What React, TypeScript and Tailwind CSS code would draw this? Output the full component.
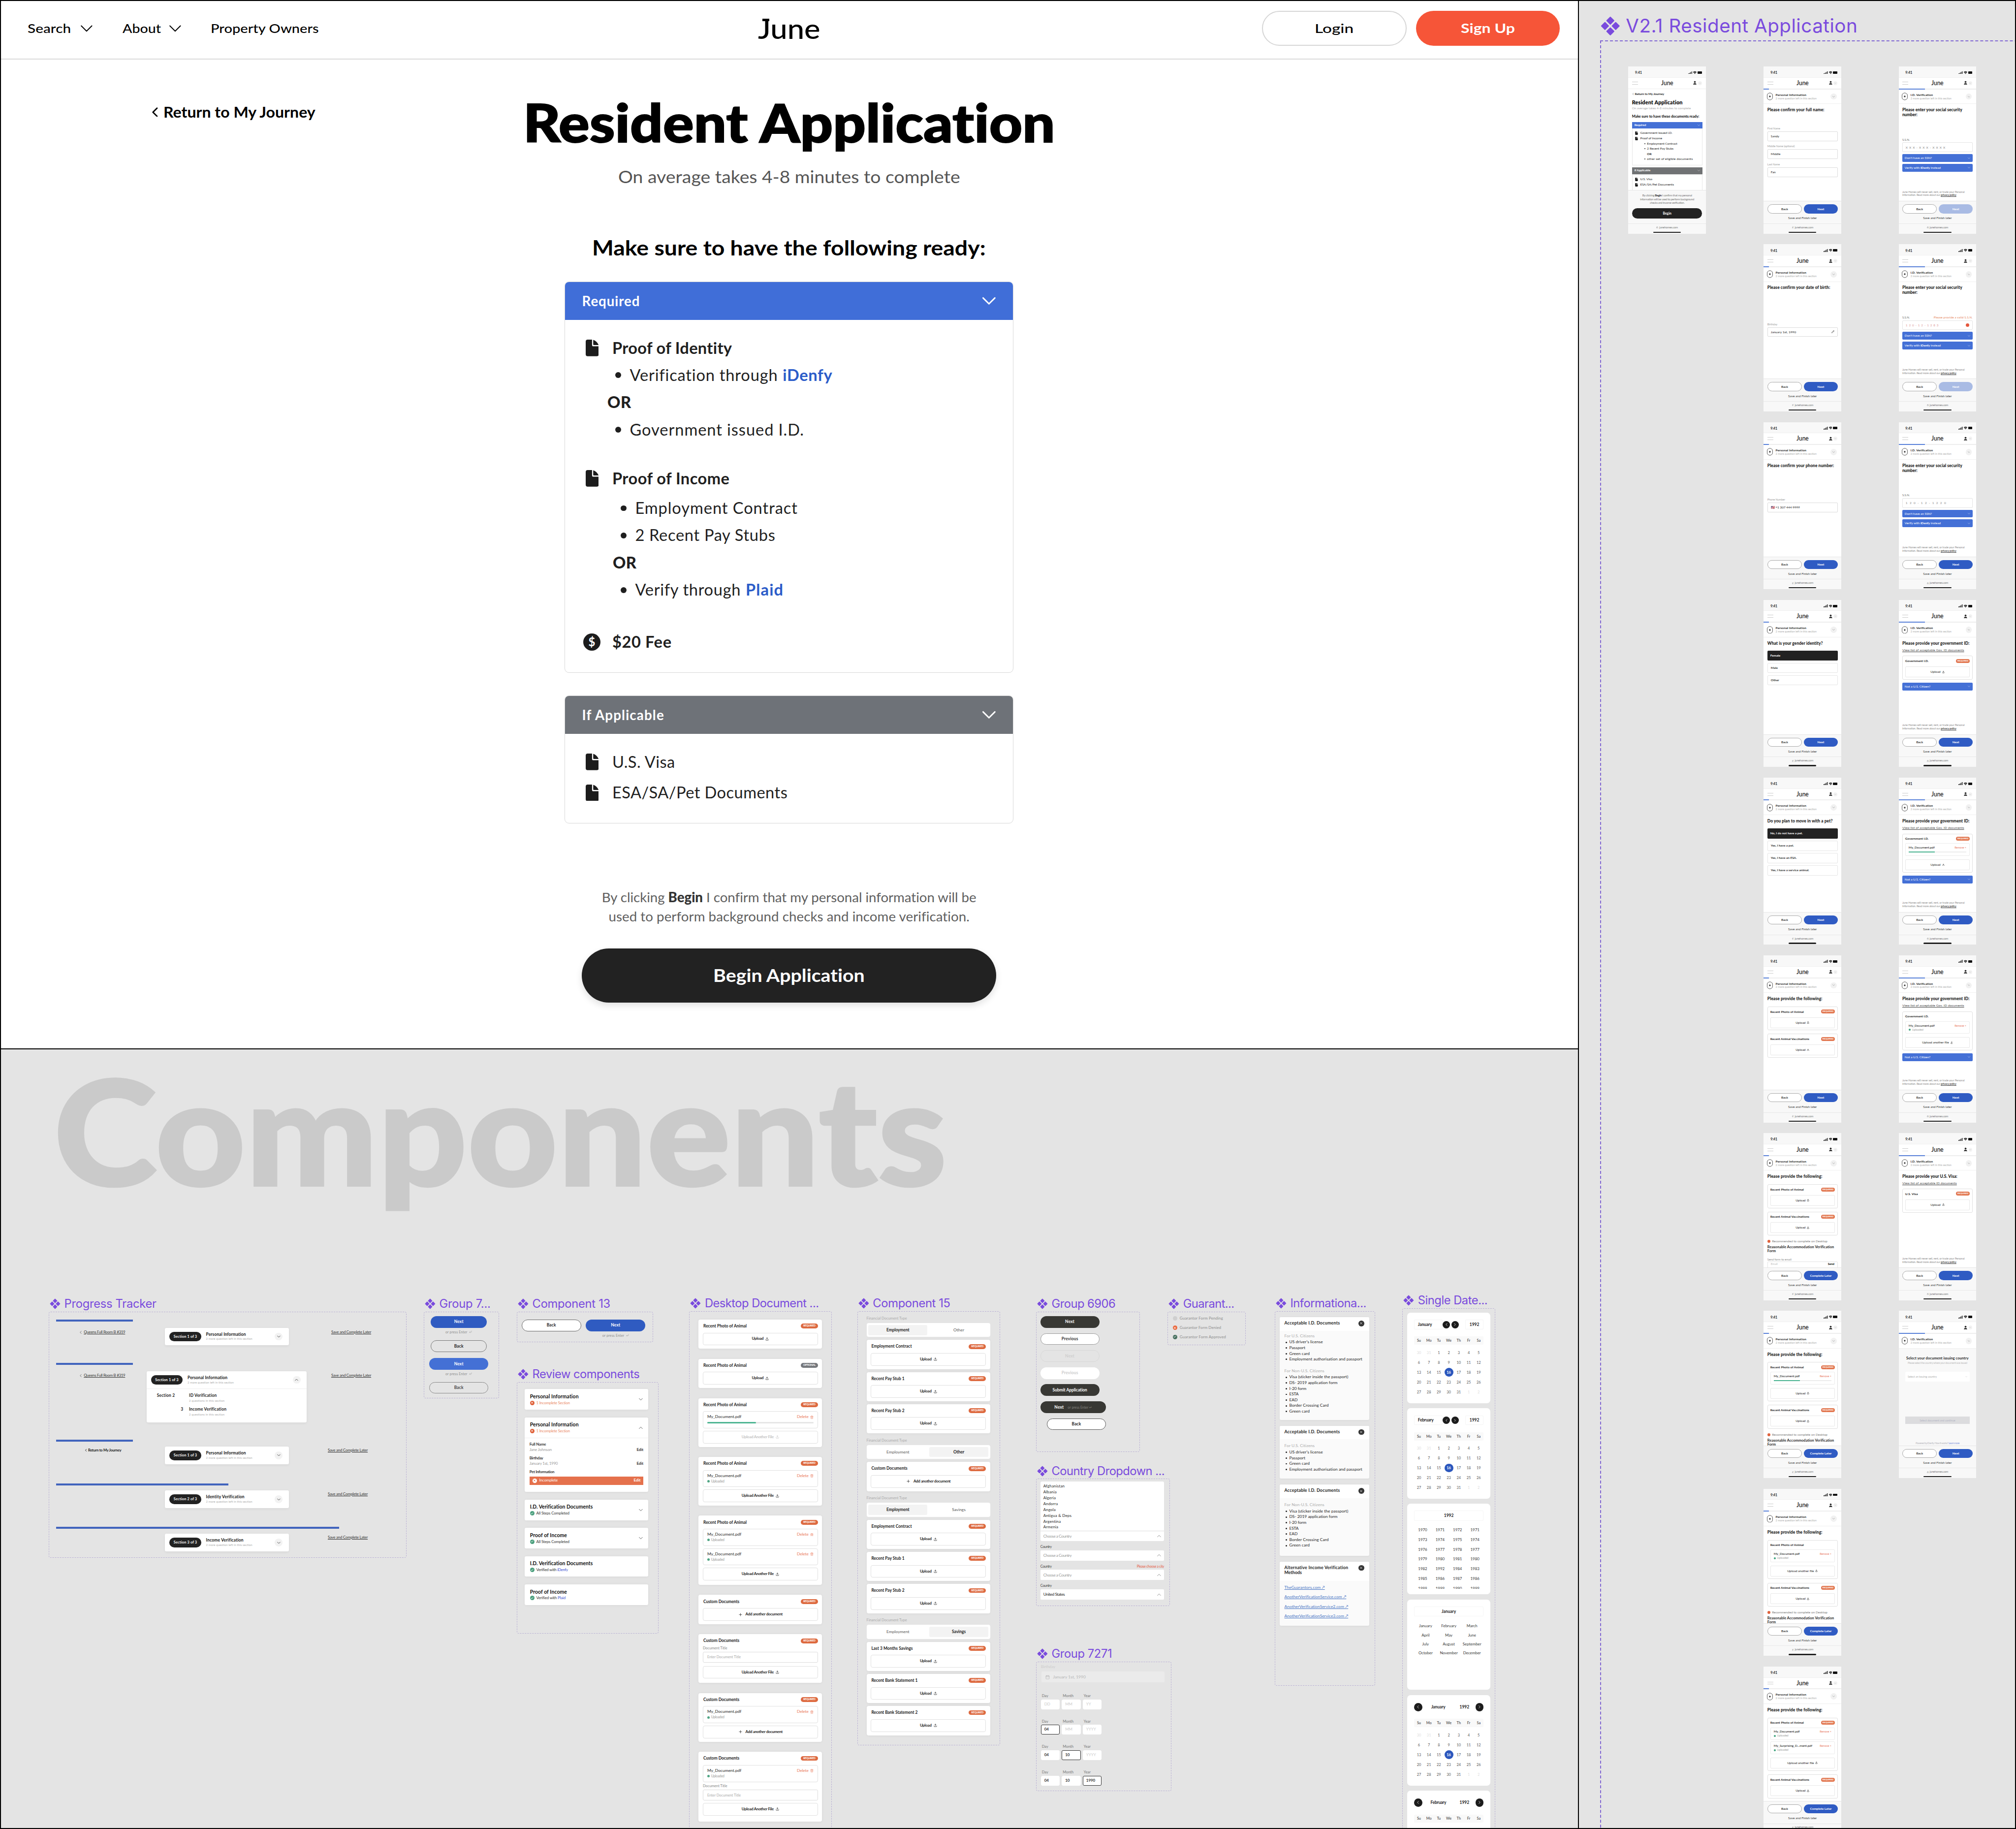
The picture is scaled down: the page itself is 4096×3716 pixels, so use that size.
import React, { useLayoutEffect, useRef } from "react";
import { Upload, Trash2, Plus, Calendar, Check, X, Pencil, Wifi, User, Lock, CornerDownLeft } from "lucide-react";

type Kids = { children?: React.ReactNode };

/* Single-line label fitted to `w` pixels, by tracking or, with `stretch`, by widening the letters. */
function T({ w, stretch = false, className = "", children }: Kids & { w?: number; stretch?: boolean; className?: string }) {
  const ref = useRef<HTMLSpanElement>(null);
  useLayoutEffect(() => {
    const el = ref.current;
    if (!el || !w) return;
    el.style.letterSpacing = "0px";
    el.style.transform = "none";
    el.style.marginRight = "0px";
    const zoom = (el as unknown as { currentCSSZoom?: number }).currentCSSZoom || 1;
    const range = document.createRange();
    range.selectNodeContents(el);
    const natural = range.getBoundingClientRect().width / zoom;
    const count = (el.textContent || "x").length;
    if (stretch) {
      el.style.transformOrigin = "0 50%";
      el.style.transform = `scaleX(${w / natural})`;
      el.style.marginRight = `${w - natural}px`;
    } else {
      el.style.letterSpacing = `${(w - natural) / count}px`;
    }
  }, [w, stretch]);
  return (
    <span ref={ref} className={"inline-block whitespace-nowrap " + className}>
      {children}
    </span>
  );
}

function Chevron({ className = "", dir = "down", sw = 2 }: { className?: string; dir?: "down" | "up" | "left" | "right"; sw?: number }) {
  const d = {
    down: "M2 7l10 10L22 7",
    up: "M2 17L12 7l10 10",
    left: "M17 2L7 12l10 10",
    right: "M7 2l10 10L7 22",
  }[dir];
  return (
    <svg viewBox="0 0 24 24" className={"shrink-0 " + className} fill="none" stroke="currentColor" strokeWidth={sw} strokeLinecap="round" strokeLinejoin="round">
      <path d={d} />
    </svg>
  );
}

function Diamonds({ className = "" }: { className?: string }) {
  return (
    <svg viewBox="0 0 24 24" className={"shrink-0 " + className} fill="currentColor" stroke="currentColor" strokeWidth="1.4" strokeLinejoin="round">
      <path d="M12 1.2l4.2 4.2L12 9.6 7.8 5.4zM12 14.4l4.2 4.2-4.2 4.2-4.2-4.2zM5.4 7.8L9.6 12l-4.2 4.2L1.2 12zM18.6 7.8l4.2 4.2-4.2 4.2-4.2-4.2z" />
    </svg>
  );
}

function DocIcon({ className = "" }: { className?: string }) {
  return (
    <svg viewBox="0 0 27 34" className={"shrink-0 " + className} fill="#1c1c1c">
      <path d="M4 0H13V11a2.6 2.6 0 0 0 2.6 2.6H27V30a4 4 0 0 1-4 4H4a4 4 0 0 1-4-4V4a4 4 0 0 1 4-4Z" />
      <path d="M15.4 0.6c5 1.600 9.500 6 11 10.600H17a1.600 1.600 0 0 1-1.600-1.600Z" />
    </svg>
  );
}

/* ------------------------------------------------------------------ */
/* Landing page                                                        */
/* ------------------------------------------------------------------ */

function Header() {
  return (
    <header className="grid h-[122px] grid-cols-3 items-center border-b-[3px] border-[#dadada] pb-1">
      <nav className="flex items-center pl-[57px] text-[26px] font-medium text-black">
        <T w={89} stretch>Search</T>
        <Chevron className="ml-[19px] h-[26px] w-[26px]" sw={1.8} />
        <T w={79} stretch className="ml-[61px]">About</T>
        <Chevron className="ml-[16px] h-[26px] w-[26px]" sw={1.8} />
        <T w={222} stretch className="ml-[60px]">Property Owners</T>
      </nav>
      <div className="flex justify-center">
        <span className="relative block h-[60px] w-[128px]">
          <T w={128} stretch className="text-[56px] font-medium leading-[60px] text-black">June</T>
          <i className="absolute left-[9px] top-[10px] h-[5px] w-[14px] bg-black" />
        </span>
      </div>
      <div className="flex justify-end gap-[19px] pr-[38px] text-[26px]">
        <span className="flex h-[71px] w-[297px] items-center justify-center rounded-full border-[3px] border-[#d6d6d6] font-medium">
          <T w={80} stretch>Login</T>
        </span>
        <span className="flex h-[71px] w-[295px] items-center justify-center rounded-full bg-[#f65538] font-bold text-white">
          <T w={111} stretch>Sign Up</T>
        </span>
      </div>
    </header>
  );
}

function Bullet() {
  return <i className="mr-[18px] block h-[12px] w-[12px] shrink-0 rounded-full bg-[#1f1f1f]" />;
}

function Line({ icon, pad = "", children }: Kids & { icon?: React.ReactNode; pad?: string }) {
  return (
    <div className={"flex h-[56px] items-center pt-[3px] " + pad}>
      {icon && <span className="flex w-[60px] shrink-0 items-center pl-[2px]">{icon}</span>}
      {children}
    </div>
  );
}

function CardHead({ color, label, w }: { color: string; label: string; w: number }) {
  return (
    <div className={"flex h-[80px] items-center justify-between px-[37px] pt-[2px] text-white " + color}>
      <T w={w} className="text-[28px] font-bold">{label}</T>
      <Chevron className="h-[29px] w-[29px]" sw={2.4} />
    </div>
  );
}

function Landing() {
  return (
    <section className="h-[2152px] w-full shrink-0 overflow-hidden bg-white">
      <Header />
      <div className="grid grid-cols-[1fr_1088px_1fr]">
        <div className="flex h-[128px] items-center pl-[308px] pt-[88px]">
          <Chevron dir="left" className="h-[20px] w-[20px]" sw={3.4} />
          <T w={312} stretch className="ml-[8px] text-[31px] font-bold leading-[40px] text-black">Return to My Journey</T>
        </div>
        <main className="flex flex-col items-center text-[33px] text-[#1f1f1f]">
          <h1 className="mt-[65px] flex h-[128px] items-center text-black">
            <T w={1092} stretch className="text-[107px] font-black leading-[128px] [-webkit-text-stroke:2px_#000]">Resident Application</T>
          </h1>
          <p className="mt-[26px] flex h-[44px] items-center text-[#555]">
            <T w={702} stretch className="text-[35px] leading-[44px]">On average takes 4-8 minutes to complete</T>
          </p>
          <h2 className="mt-[96px] flex h-[54px] items-center text-black">
            <T w={808} stretch className="text-[43px] font-bold leading-[54px]">Make sure to have the following ready:</T>
          </h2>

          <div className="mt-[43px] h-[803px] w-[922px] overflow-hidden rounded-[9px] border-2 border-[#d8d8d8]">
            <div className="-mx-[2px] -mt-[2px]">
              <CardHead color="bg-[#406ed8]" label="Required" w={119} />
            </div>
            <div className="pl-[37px] pt-[28px]">
              <Line icon={<DocIcon className="ml-[3px] h-[34px] w-[27px]" />}>
                <T w={246} className="font-bold">Proof of Identity</T>
              </Line>
              <Line pad="pl-[66px]">
                <Bullet />
                <T w={304}>Verification through</T>
                <T w={102} className="ml-[10px] font-bold text-[#2b5cc9]">iDenfy</T>
              </Line>
              <Line pad="pl-[50px]"><T w={49} className="font-black">OR</T></Line>
              <Line pad="pl-[66px]"><Bullet /><T w={358}>Government issued I.D.</T></Line>
              <div className="h-[44px]" />
              <Line icon={<DocIcon className="ml-[3px] h-[34px] w-[27px]" />}>
                <T w={241} className="font-bold">Proof of Income</T>
              </Line>
              <div className="h-[5px]" />
              <Line pad="pl-[77px]"><Bullet /><T w={334}>Employment Contract</T></Line>
              <Line pad="pl-[77px]"><Bullet /><T w={288}>2 Recent Pay Stubs</T></Line>
              <Line pad="pl-[61px]"><T w={49} className="font-black">OR</T></Line>
              <Line pad="pl-[77px]">
                <Bullet />
                <T w={217}>Verify through</T>
                <T w={78} className="ml-[10px] font-bold text-[#2b5cc9]">Plaid</T>
              </Line>
              <div className="h-[51px]" />
              <Line icon={<span className="-ml-[2px] flex h-[36px] w-[36px] items-center justify-center rounded-full bg-[#1c1c1c] text-[24px] font-bold leading-none text-white">$</span>}>
                <T w={122} className="font-bold">$20 Fee</T>
              </Line>
            </div>
          </div>

          <div className="mt-[47px] h-[263px] w-[922px] overflow-hidden rounded-[9px] border-2 border-[#d8d8d8]">
            <div className="-mx-[2px] -mt-[2px]">
              <CardHead color="bg-[#6e7278]" label="If Applicable" w={169} />
            </div>
            <div className="flex flex-col gap-[7px] pl-[37px] pt-[28px]">
              <Line icon={<DocIcon className="ml-[3px] h-[34px] w-[27px]" />}><T w={129}>U.S. Visa</T></Line>
              <Line icon={<DocIcon className="ml-[3px] h-[34px] w-[27px]" />}><T w={360}>ESA/SA/Pet Documents</T></Line>
            </div>
          </div>

          <div className="mt-[132px] flex flex-col items-center text-[28px] leading-[39px] text-[#606060]">
            <T w={769}>By clicking <b className="font-black text-[#333]">Begin</b> I confirm that my personal information will be</T>
            <T w={741}>used to perform background checks and income verification.</T>
          </div>
          <span className="mt-[46px] flex h-[111px] w-[851px] shrink-0 items-center justify-center rounded-full bg-[#222] text-white shadow-[0_6px_14px_rgba(0,0,0,0.12)]">
            <T w={311} stretch className="text-[37px] font-bold">Begin Application</T>
          </span>
        </main>
        <div />
      </div>
    </section>
  );
}

/* ------------------------------------------------------------------ */
/* Component canvas                                                    */
/* ------------------------------------------------------------------ */

function Group({ at, size, title, w, children }: Kids & { at: string; size: string; title: string; w: number }) {
  return (
    <div className={"absolute " + at}>
      <div className="mb-[4px] flex h-[26px] items-center gap-[8px] pl-[2px] pt-[2px] text-[#7a4bdd]">
        <Diamonds className="h-[22px] w-[22px]" />
        <T w={w} className="font-['Inter',sans-serif] text-[24px] leading-[24px]">{title}</T>
      </div>
      <div className={"overflow-hidden rounded-[4px] border-2 border-dashed border-[#bab1d4] " + size}>{children}</div>
    </div>
  );
}

function Round({ up = false }: { up?: boolean }) {
  return (
    <span className="flex h-[16px] w-[16px] shrink-0 items-center justify-center rounded-full bg-[#f2f2f2]">
      <Chevron dir={up ? "up" : "down"} className="h-[7px] w-[7px] text-[#333]" sw={3} />
    </span>
  );
}

function SectionPill({ n }: { n: number }) {
  return (
    <span className="flex h-[20px] w-[65px] shrink-0 items-center justify-center rounded-full bg-[#222] text-white">
      <T w={48} className="text-[7.500px] font-bold">Section {n} of 3</T>
    </span>
  );
}

function TrackerHead({ n, title, w, up }: { n: number; title: string; w: number; up?: boolean }) {
  return (
    <div className="flex h-[36px] items-center pl-[9px] pr-[13px]">
      <SectionPill n={n} />
      <div className="ml-[10px] flex flex-1 flex-col items-start">
        <T w={w} className="text-[8.500px] font-bold leading-[10px] text-[#111]">{title}</T>
        <T w={95} className="text-[6px] leading-[8px] text-[#aaa]">2 more question left in this section</T>
      </div>
      <Round up={up} />
    </div>
  );
}

function TrackerRow({ bar, height, back, tight, children }: Kids & { bar: string; height: string; back?: "room" | "journey"; tight?: boolean }) {
  return (
    <div className={height}>
      <div className={"h-[4px] bg-[#4164bd] " + bar} />
      <div className={"grid grid-cols-[224px_254px_1fr] items-start " + (tight ? "pt-[10px]" : "pt-[13px]")}>
        <div className={"flex h-[18px] items-center " + (tight ? "pl-[59px] pb-[3px]" : "pl-[48px]")}>
          {back === "room" && (
            <>
              <Chevron dir="left" className="mr-[3px] h-[6px] w-[6px]" />
              <T w={85} className="text-[8px] leading-[12px] underline text-[#333]">Queens Full Room B #319</T>
            </>
          )}
          {back === "journey" && (
            <>
              <Chevron dir="left" className="mr-[2px] h-[5px] w-[5px]" sw={4} />
              <T w={68} className="text-[7.500px] font-bold leading-[12px] text-[#111]">Return to My Journey</T>
            </>
          )}
        </div>
        <div className="whitespace-nowrap">{children}</div>
        <div className={"flex h-[18px] items-center " + (tight ? "pl-[80px] pb-[3px]" : "pl-[87px]")}>
          <T w={82} className="text-[8px] leading-[12px] underline text-[#333]">Save and Complete Later</T>
        </div>
      </div>
    </div>
  );
}

function ProgressTracker() {
  const card = "rounded-[3px] bg-white shadow-[0_2px_5px_rgba(0,0,0,0.06)]";
  return (
    <Group at="left-[100px] top-[509px]" size="h-[505px] w-[735px]" title="Progress Tracker" w={189}>
      <div className="pl-[14px] pt-[15px]">
        <TrackerRow bar="w-[158px]" height="h-[89px]" back="room">
          <div className={card}><TrackerHead n={1} title="Personal Information" w={82} /></div>
        </TrackerRow>
        <TrackerRow bar="w-[158px]" height="h-[158px]" back="room">
          <div className={"-ml-[38px] h-[105px] w-[329px] " + card}>
            <div className="border-b border-[#eee]"><TrackerHead n={1} title="Personal Information" w={82} up /></div>
            <div className="grid grid-cols-[66px_1fr] items-start gap-y-[8px] pl-[21px] pt-[9px] text-[8.500px] font-bold leading-[10px] text-[#222]">
              <T w={37}>Section 2</T>
              <div className="flex flex-col items-start">
                <T w={57}>ID Verification</T>
                <T w={73} className="text-[6px] font-normal text-[#aaa]">2 questions in this section</T>
              </div>
              <span className="pr-[12px] text-right">3</span>
              <div className="flex flex-col items-start">
                <T w={77}>Income Verification</T>
                <T w={73} className="text-[6px] font-normal text-[#aaa]">2 questions in this section</T>
              </div>
            </div>
          </div>
        </TrackerRow>
        <TrackerRow bar="w-[158px]" height="h-[90px]" back="journey" tight>
          <div className={card}><TrackerHead n={1} title="Personal Information" w={82} /></div>
        </TrackerRow>
        <TrackerRow bar="w-[354px]" height="h-[89px]" tight>
          <div className={card}><TrackerHead n={2} title="Identity Verification" w={79} /></div>
        </TrackerRow>
        <TrackerRow bar="w-[581px]" height="h-[60px]" tight>
          <div className={card}><TrackerHead n={3} title="Income Verification" w={77} /></div>
        </TrackerRow>
      </div>
    </Group>
  );
}

function Pill({ cls, children }: Kids & { cls: string }) {
  return <span className={"flex h-[24px] shrink-0 items-center justify-center rounded-full text-[8.500px] font-bold tracking-[0.2px] " + cls}>{children}</span>;
}

function EnterHint({ className = "" }: { className?: string }) {
  return (
    <span className={"flex items-center justify-center gap-[4px] text-[7px] leading-[9px] text-[#8c8c8c] " + className}>
      <T w={45}>or press Enter</T>
      <CornerDownLeft className="h-[6px] w-[6px]" />
    </span>
  );
}

function ButtonGroups() {
  return (
    <>
      <Group at="left-[870px] top-[509px]" size="h-[178px] w-[155px]" title="Group 7..." w={105}>
        <div className="flex flex-col items-center pr-[11px] pt-[8px]">
          <Pill cls="w-[115px] bg-[#2f5bc1] text-white">Next</Pill>
          <EnterHint className="mt-[4px] h-[9px]" />
          <Pill cls="mt-[13px] w-[115px] border border-[#777] text-[#222]">Back</Pill>
          <Pill cls="mt-[12px] w-[121px] bg-[#4470d5] text-white">Next</Pill>
          <EnterHint className="mt-[4px] h-[9px]" />
          <Pill cls="mt-[12px] w-[121px] border border-[#888] text-[#444]">Back</Pill>
        </div>
      </Group>
      <Group at="left-[1061px] top-[509px]" size="h-[63px] w-[280px]" title="Component 13" w={160}>
        <div className="flex gap-[10px] pl-[9px] pt-[15px]">
          <Pill cls="w-[122px] border border-[#666] bg-white text-[#222]">Back</Pill>
          <div>
            <Pill cls="w-[122px] bg-[#2f5bc1] text-white">Next</Pill>
            <EnterHint className="mt-[4px] h-[9px]" />
          </div>
        </div>
      </Group>
    </>
  );
}

function Dot({ color, kind = "check" }: { color: string; kind?: "check" | "x" | "none" }) {
  return (
    <i className={"flex h-[9px] w-[9px] shrink-0 items-center justify-center rounded-full " + color}>
      {kind === "check" && <Check className="h-[6px] w-[6px]" strokeWidth={4} />}
      {kind === "x" && <X className="h-[6px] w-[6px]" strokeWidth={4} />}
    </i>
  );
}

function ReviewHead({ title, w, open, chevron = true, children }: Kids & { title: string; w: number; open?: boolean; chevron?: boolean }) {
  return (
    <div className="flex h-[42px] shrink-0 items-center justify-between pl-[11px] pr-[11px]">
      <div className="flex flex-col items-start gap-[1px]">
        <T w={w} className="text-[10.500px] font-bold leading-[13px] text-[#111]">{title}</T>
        <span className="flex h-[11px] items-center gap-[4px] text-[8px] leading-[11px]">{children}</span>
      </div>
      {chevron && <Chevron dir={open ? "up" : "down"} className="h-[8px] w-[8px] text-[#333]" sw={2.4} />}
    </div>
  );
}

function Review() {
  const card = "h-[42px] rounded-[3px] bg-white shadow-[0_1px_5px_rgba(0,0,0,0.05)]";
  const incomplete = (
    <>
      <Dot color="bg-[#df6038] text-white" kind="x" />
      <T w={69} className="text-[#ea8b68]">1 Incomplete Section</T>
    </>
  );
  const complete = (
    <>
      <Dot color="bg-[#4b9f7d] text-white" />
      <T w={68} className="text-[#333]">All Steps Completed</T>
    </>
  );
  const field = "flex items-end justify-between text-[8px] leading-[11px]";
  return (
    <Group at="left-[1061px] top-[653px]" size="h-[517px] w-[291px]" title="Review components" w={220}>
      <div className="flex w-[284px] flex-col gap-[16px] px-[15px] pt-[14px]">
        <div className={card}><ReviewHead title="Personal Information" w={100}>{incomplete}</ReviewHead></div>
        <div className="h-[153px] rounded-[3px] bg-white shadow-[0_1px_5px_rgba(0,0,0,0.05)]">
          <div className="border-b-2 border-[#eee]"><ReviewHead title="Personal Information" w={100} open>{incomplete}</ReviewHead></div>
          <div className="flex flex-col px-[10px] pt-[7px] font-bold text-[#333]">
            <div className={field}>
              <div className="flex flex-col items-start"><T w={34}>Full Name</T><T w={46} className="font-normal text-[#999]">Jane Johnson</T></div>
              <T w={14} className="mr-[6px]">Edit</T>
            </div>
            <div className={"mt-[6px] " + field}>
              <div className="flex flex-col items-start"><T w={28}>Birthday</T><T w={58} className="font-normal text-[#999]">January 1st, 1990</T></div>
              <T w={14} className="mr-[6px]">Edit</T>
            </div>
            <T w={51} className="mt-[6px] self-start text-[8px] leading-[12px]">Pet Information</T>
            <div className="mt-[3px] flex h-[18px] items-center gap-[5px] bg-[#e5714c] px-[6px] text-[8px] text-white">
              <Dot color="bg-white text-[#e5714c]" kind="x" />
              <T w={38} className="font-normal">Incomplete</T>
              <span className="flex-1" />
              <T w={14}>Edit</T>
            </div>
          </div>
        </div>
        <div className={card}><ReviewHead title="I.D. Verification Documents" w={129}>{complete}</ReviewHead></div>
        <div className={card}><ReviewHead title="Proof of Income" w={76}>{complete}</ReviewHead></div>
        <div className={card}>
          <ReviewHead title="I.D. Verification Documents" w={129} chevron={false}>
            <Dot color="bg-[#4b9f7d] text-white" /><T w={65} className="text-[#333]">Verified with <b className="font-normal text-[#3b4fd0]">iDenfy</b></T>
          </ReviewHead>
        </div>
        <div className={card}>
          <ReviewHead title="Proof of Income" w={76} chevron={false}>
            <Dot color="bg-[#4b9f7d] text-white" /><T w={60} className="text-[#333]">Verified with <b className="font-normal text-[#3b4fd0]">Plaid</b></T>
          </ReviewHead>
        </div>
      </div>
    </Group>
  );
}

/* Document upload cards */

function Badge({ optional = false }: { optional?: boolean }) {
  return (
    <span className={"flex h-[10px] w-[35px] items-center justify-center rounded-full text-white " + (optional ? "bg-[#75787c]" : "bg-[#dd6a40]")}>
      <T w={25} className="text-[5.500px] font-bold leading-[10px]">{optional ? "OPTIONAL" : "REQUIRED"}</T>
    </span>
  );
}

function UploadBox({ kind = "upload" }: { kind?: "upload" | "another" | "faded" | "add" }) {
  return (
    <div className={"flex h-[26px] shrink-0 items-center justify-center gap-[4px] rounded-[4px] border border-[#e0e0e0] text-[8px] font-bold " + (kind === "faded" ? "text-[#c4c4c4]" : "text-[#222]")}>
      {kind === "add" && <Plus className="mr-[2px] h-[9px] w-[9px]" strokeWidth={2} />}
      <T w={kind === "upload" ? 24 : kind === "add" ? 76 : 66}>
        {kind === "upload" ? "Upload" : kind === "add" ? "Add another document" : "Upload Another File"}
      </T>
      {kind !== "add" && <Upload className="h-[7px] w-[7px]" strokeWidth={2.500} />}
    </div>
  );
}

function FileBox({ loading = false }: { loading?: boolean }) {
  return (
    <div className="h-[35px] shrink-0 rounded-[4px] border border-[#e0e0e0] px-[8px] pt-[5px]">
      <div className="flex items-center justify-between text-[8.500px] leading-[12px]">
        <T w={70} className="text-[#222]">My_Document.pdf</T>
        <span className="flex items-center gap-[3px] text-[#ea7a5c]"><T w={24}>Delete</T><Trash2 className="h-[7px] w-[7px]" /></span>
      </div>
      {loading ? (
        <div className="mt-[4px] h-[3px] rounded-full bg-[#e6e6e6]"><div className="h-[3px] w-[100px] rounded-full bg-[#4fb593]" /></div>
      ) : (
        <span className="flex items-center gap-[3px] text-[7px] leading-[10px] text-[#999]"><i className="h-[5px] w-[5px] rounded-full bg-[#4fa583]" /><T w={27}>Uploaded</T></span>
      )}
    </div>
  );
}

function TitleInput() {
  return (
    <div className="flex shrink-0 flex-col">
      <T w={50} className="self-start text-[7.500px] leading-[9px] text-[#888]">Document Title</T>
      <div className="mt-[2px] flex h-[22px] items-center rounded-[3px] border border-[#dcdcdc] px-[8px]"><T w={69} className="text-[7.500px] text-[#aaa]">Enter Document Title</T></div>
    </div>
  );
}

function DocCard({ title, w, size = "h-[60px]", optional, children }: Kids & { title: string; w: number; size?: string; optional?: boolean }) {
  return (
    <div className={"flex w-[254px] shrink-0 flex-col gap-[5px] rounded-[4px] bg-white px-[9px] shadow-[0_1px_5px_rgba(0,0,0,0.05)] " + size}>
      <div className="flex h-[22px] shrink-0 items-center justify-between pt-[5px]">
        <T w={w} className="pl-px text-[8.500px] font-bold text-[#1a1a1a]">{title}</T>
        <Badge optional={optional} />
      </div>
      {children}
    </div>
  );
}

function DesktopDocs() {
  const animal = "Recent Photo of Animal";
  return (
    <Group at="left-[1415px] top-[508px]" size="h-[1110px] w-[293px]" title="Desktop Document ..." w={234}>
      <div className="flex flex-col gap-[20.700px] pl-[18px] pt-[16px]">
        <DocCard title={animal} w={89}><UploadBox /></DocCard>
        <DocCard title={animal} w={89} optional><UploadBox /></DocCard>
        <DocCard title={animal} w={89} size="h-[100px]"><FileBox loading /><UploadBox kind="faded" /></DocCard>
        <DocCard title={animal} w={89} size="h-[100px]"><FileBox /><UploadBox kind="another" /></DocCard>
        <DocCard title={animal} w={89} size="h-[142px]"><FileBox /><FileBox /><UploadBox kind="another" /></DocCard>
        <DocCard title="Custom Documents" w={74}><UploadBox kind="add" /></DocCard>
        <DocCard title="Custom Documents" w={74} size="h-[100px]"><div className="-mt-[2px] mb-[2px]"><TitleInput /></div><UploadBox kind="another" /></DocCard>
        <DocCard title="Custom Documents" w={74} size="h-[100px]"><FileBox /><UploadBox kind="add" /></DocCard>
        <DocCard title="Custom Documents" w={74} size="h-[143px]"><FileBox /><TitleInput /><UploadBox kind="another" /></DocCard>
      </div>
    </Group>
  );
}

function Toggle({ left, right, active }: { left: string; right: string; active: "l" | "r" }) {
  const on = "bg-[#f3f3f3] font-bold text-[#222]";
  const off = "text-[#555]";
  return (
    <div>
      <div className="flex h-[24px] items-center pt-[5px]"><T w={83} className="text-[7.500px] text-[#aaa]">Financial Document Type</T></div>
      <div className="flex h-[29px] w-[254px] gap-[4px] rounded-[4px] bg-white p-[4px] text-[8.500px]">
        <span className={"flex flex-1 items-center justify-center rounded-[3px] " + (active === "l" ? on : off)}><T w={47}>{left}</T></span>
        <span className={"flex flex-1 items-center justify-center rounded-[3px] " + (active === "r" ? on : off)}>{right}</span>
      </div>
    </div>
  );
}

function Component15() {
  const Up = ({ t, w }: { t: string; w: number }) => <DocCard title={t} w={w}><UploadBox /></DocCard>;
  return (
    <Group at="left-[1760px] top-[508px]" size="h-[891px] w-[293px]" title="Component 15" w={159}>
      <div className="flex flex-col gap-[5.900px] pl-[18px]">
        <div className="-mt-[1px]"><Toggle left="Employment" right="Other" active="l" /></div>
        <Up t="Employment Contract" w={83} />
        <Up t="Recent Pay Stub 1" w={68} />
        <Up t="Recent Pay Stub 2" w={68} />
        <div className="-mt-[6px]"><Toggle left="Employment" right="Other" active="r" /></div>
        <DocCard title="Custom Documents" w={74}><UploadBox kind="add" /></DocCard>
        <div className="-mt-[6px]"><Toggle left="Employment" right="Savings" active="l" /></div>
        <Up t="Employment Contract" w={83} />
        <Up t="Recent Pay Stub 1" w={68} />
        <Up t="Recent Pay Stub 2" w={68} />
        <div className="-mt-[6px]"><Toggle left="Employment" right="Savings" active="r" /></div>
        <Up t="Last 3 Months Savings" w={85} />
        <Up t="Recent Bank Statement 1" w={95} />
        <Up t="Recent Bank Statement 2" w={95} />
      </div>
    </Group>
  );
}

function Group6906() {
  return (
    <Group at="left-[2127px] top-[509px]" size="h-[288px] w-[213px]" title="Group 6906" w={131}>
      <div className="flex flex-col items-start gap-[11px] pl-[8px] pt-[8px]">
        <Pill cls="w-[121px] bg-[#383834] text-white">Next</Pill>
        <Pill cls="w-[121px] border border-[#999] bg-white text-[#333]">Previous</Pill>
        <Pill cls="w-[121px] border border-[#d8d8d8] text-[#cfcfcf]">Next</Pill>
        <Pill cls="w-[121px] bg-white text-[#ccc]">Previous</Pill>
        <Pill cls="w-[121px] bg-[#383834] text-white"><T w={71}>Submit Application</T></Pill>
        <Pill cls="w-[135px] gap-[8px] bg-[#383834] text-white">Next<T w={50} className="text-[7px] font-normal text-[#85857f]">or press Enter ↵</T></Pill>
        <Pill cls="ml-[13px] w-[122px] border border-[#555] bg-white text-[#222]">Back</Pill>
      </div>
    </Group>
  );
}

function Guarantor() {
  return (
    <Group at="left-[2397px] top-[509px]" size="h-[69px] w-[161px]" title="Guarant..." w={105}>
      <div className="flex flex-col gap-[9px] pl-[10px] pt-[8px] text-[8px] leading-[10px] text-[#8c8c8c]">
        <span className="flex h-[10px] items-center gap-[5px]"><Dot color="bg-[#cfcfcf]" kind="none" /><T w={89}>Guarantor Form Pending</T></span>
        <span className="flex h-[10px] items-center gap-[5px]"><Dot color="bg-[#ea6a3f] text-white" kind="x" /><T w={85}>Guarantor Form Denied</T></span>
        <span className="flex h-[10px] items-center gap-[5px]"><Dot color="bg-[#47705f] text-white" /><T w={95}>Guarantor Form Approved</T></span>
      </div>
    </Group>
  );
}

function CountryDropdown() {
  const countries = ["Afghanistan", "Albania", "Algeria", "Andorra", "Angola", "Antigua & Deps", "Argentina", "Armenia"];
  const Field = ({ value, filled, error }: { value: string; filled?: boolean; error?: boolean }) => (
    <div>
      <div className="flex h-[19px] items-end justify-between pb-[2px] text-[7.500px] leading-[10px] text-[#444]">
        <T w={23}>Country</T>
        {error && <T w={56} className="text-[7px] text-[#e4573d]">Please choose a city</T>}
      </div>
      <div className="flex h-[21px] items-center justify-between rounded-[2px] bg-white px-[6px] text-[8.500px]">
        <T w={filled ? 44 : 58} className={filled ? "text-[#222]" : "text-[#999]"}>{value}</T>
        <Chevron dir="up" className="h-[8px] w-[8px] text-[#555]" />
      </div>
    </div>
  );
  return (
    <Group at="left-[2127px] top-[852px]" size="h-[261px] w-[275px]" title="Country Dropdown ..." w={232}>
      <div className="w-[262px] pl-[8px] pt-[5px]">
        <div className="flex h-[122px] flex-col overflow-hidden rounded-[3px] bg-white text-[8px] text-[#222]">
          <ul className="h-[102px] shrink-0 border-b border-[#ddd] px-[6px] pt-[4px] leading-[12px] tracking-[0.200px]">
            {countries.map((c) => <li key={c}>{c}</li>)}
          </ul>
          <div className="flex flex-1 items-center justify-between px-[6px] text-[8.500px] text-[#999]"><T w={58}>Choose a Country</T><Chevron dir="up" className="h-[8px] w-[8px] text-[#555]" /></div>
        </div>
        <Field value="Choose a Country" />
        <Field value="Choose a Country" error />
        <Field value="United States" filled />
      </div>
    </Group>
  );
}

function DateInputs() {
  const rows = [
    { v: ["DD", "MM", "YY"], active: -1, set: 0 },
    { v: ["04", "MM", "YYYY"], active: 0, set: 1 },
    { v: ["04", "10", "YYYY"], active: 1, set: 2 },
    { v: ["04", "10", "1990"], active: 2, set: 3 },
  ];
  return (
    <Group at="left-[2127px] top-[1227px]" size="h-[266px] w-[278px]" title="Group 7271" w={124}>
      <div className="pl-[9px] pt-[4px]">
        <div className="h-[14px] text-[8px] leading-[12px] text-[#cdcdcd]">Birthday</div>
        <div className="ml-[1px] mt-[2px] flex h-[22px] w-[253px] items-center gap-[7px] rounded-[2px] bg-[#ebebeb] px-[8px] text-[#b5b5b5]">
          <Calendar className="h-[9px] w-[9px]" /><T w={67} className="text-[8.500px]">January 1st, 1990</T>
        </div>
        <div className="mt-[23px] flex flex-col gap-[20.300px]">
          {rows.map((r, i) => (
            <div key={i} className="flex gap-[4px]">
              {r.v.map((v, j) => (
                <div key={j} className="w-[39px]">
                  <div className="h-[12px] pl-[2px] text-[7.500px] leading-[10px] text-[#777]">{["Day", "Month", "Year"][j]}</div>
                  <div className={"flex h-[20px] items-center rounded-[3px] bg-white pl-[6px] text-[8px] " + (r.active === j ? "border border-[#333] " : "border border-white ") + (j < r.set ? "font-bold text-[#333]" : "text-[#ccc]")}>{v}</div>
                </div>
              ))}
            </div>
          ))}
        </div>
      </div>
    </Group>
  );
}

const US: [string, number][] = [["US driver's license", 69], ["Passport", 33], ["Green card", 42], ["Employment authorisation and passport", 150]];
const NON_US: [string, number][] = [["Visa (sticker inside the passport)", 121], ["DS- 2019 application form", 99], ["I-20 form", 35], ["ESTA", 19], ["EAD", 17], ["Border Crossing Card", 81], ["Green card", 42]];

function InfoHead({ children, tall }: Kids & { tall?: boolean }) {
  return (
    <div className={"flex justify-between rounded-t-[3px] bg-white pl-[10px] pr-[10px] pt-[7px] text-[9px] font-bold leading-[11px] text-[#222] " + (tall ? "h-[40px]" : "h-[28px]")}>
      <div>{children}</div>
      <i className="flex h-[12px] w-[12px] items-center justify-center rounded-full bg-[#333] text-white"><X className="h-[7px] w-[7px]" strokeWidth={3} /></i>
    </div>
  );
}

function InfoList({ label, w, items }: { label: string; w: number; items: [string, number][] }) {
  return (
    <div className="flex flex-col items-start pl-[10px] pt-[7px] text-[8.500px] leading-[11.700px]">
      <T w={w} className="leading-[14px] text-[#aaa]">{label}</T>
      {items.map(([t, tw]) => (
        <div key={t} className="flex h-[11.700px] items-center gap-[5px] pl-[2px] text-[#222]"><i className="h-[3px] w-[3px] rounded-full bg-[#222]" /><T w={tw}>{t}</T></div>
      ))}
    </div>
  );
}

function Informational() {
  const card = "rounded-[3px] bg-[#fafafa] shadow-[0_1px_4px_rgba(0,0,0,0.05)]";
  const title = <T w={114}>Acceptable I.D. Documents</T>;
  return (
    <Group at="left-[2617px] top-[508px]" size="h-[769px] w-[206px]" title="Informationa..." w={156}>
      <div className="flex w-[193px] flex-col gap-[12px] pl-[9px] pt-[11px]">
        <div className={"h-[211px] " + card}><InfoHead>{title}</InfoHead><div className="-mt-[3px]"><InfoList label="For U.S. Citizens" w={62} items={US} /></div><div className="mt-[4px]"><InfoList label="For Non-U.S. Citizens" w={82} items={NON_US} /></div></div>
        <div className={"h-[109px] " + card}><InfoHead>{title}</InfoHead><InfoList label="For U.S. Citizens" w={62} items={US} /></div>
        <div className={"h-[146px] " + card}><InfoHead>{title}</InfoHead><InfoList label="For Non-U.S. Citizens" w={82} items={NON_US} /></div>
        <div className={"h-[132px] " + card}>
          <InfoHead tall><T w={131}>Alternative Income Verification</T><br />Methods</InfoHead>
          <div className="flex flex-col items-start pl-[10px] pt-[4px] text-[8.500px] leading-[19.500px] text-[#4674c4] underline">
            <T w={83}>TheGuarantors.com ↗</T>
            <T w={127}>AnotherVerificationService.com ↗</T>
            <T w={131}>AnotherVerificationService2.com ↗</T>
            <T w={131}>AnotherVerificationService3.com ↗</T>
          </div>
        </div>
      </div>
    </Group>
  );
}

function Arrow({ dir, size }: { dir: "left" | "right"; size: string }) {
  return <i className={"flex shrink-0 items-center justify-center rounded-full bg-[#1c1c1c] text-white " + size}><Chevron dir={dir} className="h-[6px] w-[6px]" sw={3} /></i>;
}

function CalCard({ children }: Kids) {
  return <div className="h-[185.600px] w-[171px] shrink-0 overflow-hidden rounded-[7px] bg-white px-[14px] pt-[14px]">{children}</div>;
}

function CalMonth({ month, wide }: { month: string; wide?: boolean }) {
  const days = Array.from({ length: 35 }, (_, i) => (i < 2 ? 30 + i : i < 33 ? i - 1 : i - 32));
  const mw = month === "January" ? 29 : 32;
  return (
    <CalCard>
      {wide ? (
        <div className="flex h-[21px] items-center justify-between text-[8.500px] font-bold text-[#222]">
          <Arrow dir="left" size="h-[17px] w-[17px]" />
          <span className="flex-1 pl-[2px] text-center"><T w={mw}>{month}</T></span>
          <span className="w-[45px] text-center">1992</span>
          <Arrow dir="right" size="h-[17px] w-[17px]" />
        </div>
      ) : (
        <div className="flex h-[21px] items-center text-[8.500px] font-bold text-[#222]">
          <span className="flex h-[20px] w-[59px] items-center rounded-[2px] border border-[#f5f5f5] pl-[7px]"><T w={mw}>{month}</T></span>
          <Arrow dir="left" size="h-[15px] w-[15px]" />
          <span className="w-[3px]" />
          <Arrow dir="right" size="h-[15px] w-[15px]" />
          <span className="ml-[13px] flex h-[20px] flex-1 items-center justify-center rounded-[2px] border border-[#f5f5f5]">1992</span>
        </div>
      )}
      <div className="mt-[14px] grid h-[17px] grid-cols-7 items-center rounded-[2px] bg-[#f9f9f9] text-center text-[7.500px] font-medium text-[#444]">
        {["Su", "Mo", "Tu", "We", "Th", "Fr", "Sa"].map((d) => <span key={d}>{d}</span>)}
      </div>
      <div className="mt-[6px] grid grid-cols-7 text-center text-[7.500px]">
        {days.map((d, i) => (
          <span key={i} className={"flex h-[20.200px] items-center justify-center " + (i < 2 || i > 32 ? "text-[#ddd]" : "text-[#555]")}>
            {i === 17 ? <b className="flex h-[18px] w-[18px] items-center justify-center rounded-full bg-[#2b57bd] text-white">16</b> : d}
          </span>
        ))}
      </div>
    </CalCard>
  );
}

function SingleDate() {
  const years = "1970 1971 1972 1971 1973 1974 1975 1974 1976 1977 1978 1977 1979 1980 1981 1980 1982 1992 1984 1983 1985 1986 1987 1986 1988 1989 1990 1989".split(" ");
  const months = "January February March April May June July August September October November December".split(" ");
  const head = "flex h-[21px] items-center justify-center rounded-[2px] border border-[#f6f6f6] text-[8.500px] font-bold text-[#222]";
  return (
    <Group at="left-[2879px] top-[502px]" size="h-[1110px] w-[191px]" title="Single Date..." w={143}>
      <div className="flex flex-col gap-[10.700px] pl-[9px] pt-[8px]">
        <CalMonth month="January" />
        <CalMonth month="February" />
        <CalCard>
          <div className={head}>1992</div>
          <div className="mt-[9px] grid h-[130px] grid-cols-4 overflow-hidden text-center text-[8px] leading-[20px] text-[#333]">
            {years.map((y, i) => <span key={i}>{y}</span>)}
          </div>
        </CalCard>
        <CalCard>
          <div className={head}>January</div>
          <div className="mt-[10px] grid grid-cols-3 text-center text-[8px] leading-[18.600px] text-[#333]">
            {months.map((m) => <span key={m}>{m}</span>)}
          </div>
        </CalCard>
        <CalMonth month="January" wide />
        <CalMonth month="February" wide />
      </div>
    </Group>
  );
}

function ComponentCanvas() {
  return (
    <section className="relative w-full flex-1 overflow-hidden border-t-[3px] border-black bg-[#e4e4e4]">
      <h2 className="absolute left-[110px] top-[15px] whitespace-nowrap text-[300px] font-black leading-[300px] text-[#cacaca]">
        <T w={1834} stretch className="[-webkit-text-stroke:4px_#cacaca]">Components</T>
      </h2>
      <ProgressTracker />
      <ButtonGroups />
      <Review />
      <DesktopDocs />
      <Component15 />
      <Group6906 />
      <Guarantor />
      <CountryDropdown />
      <DateInputs />
      <Informational />
      <SingleDate />
    </section>
  );
}

/* ------------------------------------------------------------------ */
/* Mobile screens                                                      */
/* ------------------------------------------------------------------ */

function PhoneTop() {
  return (
    <>
      <div className="flex h-[23px] shrink-0 items-center justify-between border-b border-[#f0f0f0] bg-[#f8f8f8] pl-[14px] pr-[8px] pt-[3px] text-[#222]">
        <span className="text-[7px] font-bold">9:41</span>
        <span className="flex items-center gap-[2px]">
          <svg viewBox="0 0 9 6" className="h-[6px] w-[9px]" fill="#222"><path d="M0 4h1.500v2H0zM2.300 3h1.500v3H2.300zM4.600 1.500h1.500V6H4.600zM7 0h1.500v6H7z" /></svg>
          <Wifi className="h-[7px] w-[7px]" strokeWidth={4} />
          <i className="h-[5px] w-[9px] rounded-[1px] bg-[#111]" />
        </span>
      </div>
      <div className="grid h-[22px] shrink-0 grid-cols-3 items-center px-[8px]">
        <span className="flex flex-col gap-[4px]"><i className="h-px w-[12px] bg-[#ccc]" /><i className="h-px w-[12px] bg-[#ccc]" /></span>
        <span className="flex justify-center"><T w={25} stretch className="text-[12.500px] font-medium leading-[14px] text-[#111]">June</T></span>
        <span className="flex items-center justify-end gap-[2px]"><User className="h-[9px] w-[9px] text-[#222]" fill="#222" /><span className="flex h-[8px] w-[8px] items-center justify-center rounded-full bg-[#f3f3f3]"><Chevron className="h-[4px] w-[4px] text-[#999]" /></span></span>
      </div>
    </>
  );
}

function PhoneBottom() {
  return (
    <div className="relative flex h-[21px] shrink-0 flex-col items-center border-t border-[#e8e8e8] bg-[#f8f8f8] pt-[3px]">
      <span className="flex items-center gap-[2px] text-[6px] leading-[9px] text-[#777]"><Lock className="h-[4px] w-[4px]" /><T w={38}>junehomes.com</T></span>
      <i className="mt-[4px] h-[2.500px] w-[57px] rounded-full bg-[#222]" />
    </div>
  );
}

function Phone({ step, next = "Next", dim, gray, children }: Kids & { step: 1 | 2; next?: string; dim?: boolean; gray?: boolean }) {
  return (
    <article className="flex h-[343px] w-[159.500px] shrink-0 flex-col overflow-hidden bg-white">
      <PhoneTop />
      <div className="h-[2px] shrink-0 bg-[#eee]"><div className={"h-[2px] bg-[#5a82d9] " + (step === 1 ? "w-[11px]" : "w-[54px]")} /></div>
      <div className="flex h-[30px] shrink-0 items-center border-b border-[#f0f0f0] pl-[6.500px] pr-[9px]">
        <svg viewBox="0 0 12 16" className="h-[16px] w-[12px] shrink-0" fill="none" stroke="#444" strokeWidth="0.900" strokeLinejoin="round"><path d="M3.500 1.500Q6 0 8.500 1.500 11.500 3 11.500 5v6q0 2-3 3.500-2.500 1.500-5 0-3-1.500-3-3.500V5q0-2 3-3.500Z" /><circle cx="6" cy="8" r="1.300" fill="#333" /></svg>
        <div className="ml-[6px] flex flex-1 flex-col items-start">
          <T w={step === 1 ? 63 : 46} className="text-[6.500px] font-bold leading-[8px] text-[#222]">{step === 1 ? "Personal Information" : "I.D. Verification"}</T>
          <T w={84} className="text-[5.500px] leading-[7px] text-[#aaa]">2 more question left in this section</T>
        </div>
        <span className="flex h-[13px] w-[13px] items-center justify-center rounded-full bg-[#f1f1f1]"><Chevron className="h-[5px] w-[5px] text-[#555]" /></span>
      </div>
      <div className={"flex min-h-0 flex-1 flex-col overflow-hidden px-[7.500px] " + (gray ? "bg-[#f8f8f8]" : "")}>{children}</div>
      <div className="flex h-[46px] shrink-0 flex-col items-center border-t border-[#e6e6e6] bg-[#f8f8f8] px-[7.500px] pt-[6px] text-[6.500px]">
        <div className="flex w-full gap-[4px] font-bold">
          <span className="flex h-[18.500px] flex-1 items-center justify-center rounded-full border border-[#aaa] bg-white text-[#333]">Back</span>
          <span className={"flex h-[18.500px] flex-1 items-center justify-center rounded-full text-white " + (dim ? "bg-[#a9bbe4]" : "bg-[#2f5bc3]")}>{next}</span>
        </div>
        <T w={59} className="mt-[6px] leading-[9px] text-[#333]">Save and Finish later</T>
      </div>
      <PhoneBottom />
    </article>
  );
}

function Q({ w, children }: Kids & { w: number }) {
  return <div className="mt-[8px] flex h-[10px] shrink-0 items-center"><T w={w} className="text-[8.500px] font-black leading-[10px] text-[#1a1a1a]">{children}</T></div>;
}

function MField({ label, value, gap, w, right }: { label: string; value: string; gap: string; w?: number; right?: React.ReactNode }) {
  return (
    <div className={"shrink-0 " + gap}>
      <div className="h-[9px] text-[5.500px] leading-[8px] text-[#999]">{label}</div>
      <div className="flex h-[20px] items-center justify-between rounded-[2px] border border-[#dcdcdc] px-[6px]"><T w={w} className="text-[6.500px] font-medium text-[#333]">{value}</T>{right}</div>
    </div>
  );
}

function BlueBar({ gap, children }: Kids & { gap: string }) {
  return <div className={"flex h-[16px] shrink-0 items-center justify-between rounded-[2px] bg-[#4470d6] px-[5px] text-[6.500px] text-white " + gap}><span>{children}</span><Chevron className="h-[5px] w-[5px]" /></div>;
}

function Privacy() {
  return (
    <div className="mb-[8px] mt-auto flex shrink-0 flex-col items-start text-[5.500px] leading-[7px] text-[#888]">
      <T w={128}>June Homes will never sell, rent, or trade your Personal</T>
      <T w={111}>Information. Read more about our <u className="font-bold text-[#444]">privacy policy</u></T>
    </div>
  );
}

function Ssn({ value, error, dim }: { value: string; error?: boolean; dim?: boolean }) {
  return (
    <Phone step={2} dim={dim}>
      <Q w={123}>Please enter your social security</Q>
      <div className="-mt-[8px]"><Q w={31}>number:</Q></div>
      <div className="mt-[41px] flex h-[10px] shrink-0 justify-between text-[6px] leading-[8px] text-[#666]"><span>S.S.N.</span>{error && <T w={80} className="text-[#e58156]">Please provide a valid S.S.N.</T>}</div>
      <div className="flex h-[20px] shrink-0 items-center justify-between rounded-[2px] border border-[#e4e4e4] px-[6px]">
        <T w={error ? 68 : 84} className={"text-[6.500px] " + (error ? "text-[#d99]" : "text-[#888]")}>{value}</T>
        {error && <i className="h-[7px] w-[7px] rounded-full bg-[#e4573d]" />}
      </div>
      <BlueBar gap="mt-[4px]">Don't have an SSN?</BlueBar>
      <BlueBar gap="mt-[4px]">Verify with <b>iDenfy</b> instead</BlueBar>
      <Privacy />
    </Phone>
  );
}

function Options({ items }: { items: string[] }) {
  return (
    <div className="mt-[9px] flex flex-col gap-[4.300px]">
      {items.map((t, i) => (
        <div key={t} className={"flex h-[21px] shrink-0 items-center rounded-[2px] px-[6px] text-[6.500px] font-bold " + (i === 0 ? "bg-[#222] text-white" : "border border-[#e6e6e6] text-[#333]")}>{t}</div>
      ))}
    </div>
  );
}

function MDoc({ title, w, gap, files = [], loading, badge = true, another }: { title: string; w: number; gap: string; files?: string[]; loading?: boolean; badge?: boolean; another?: boolean }) {
  return (
    <div className={"flex shrink-0 flex-col rounded-[3px] border border-[#e0e0e0] px-[5px] pb-[4px] " + gap}>
      <div className="flex h-[19px] shrink-0 items-center justify-between">
        <T w={w} className="text-[6.500px] font-bold text-[#222]">{title}</T>
        {badge && <span className="flex h-[8px] w-[28px] items-center justify-center rounded-full bg-[#e27750] text-[4.500px] font-bold leading-[8px] text-white">REQUIRED</span>}
      </div>
      <div className="flex flex-col gap-[3px]">
        {files.map((f) => (
          <div key={f} className="h-[26px] rounded-[2px] border border-[#ececec] px-[6px] pt-[4px]">
            <div className="flex justify-between text-[6.500px] leading-[9px]"><span className="font-medium text-[#222]">{f}</span><span className="text-[5.500px] text-[#e8735a]">Remove ×</span></div>
            {loading ? (
              <div className="mt-[3px] h-[2px] bg-[#ececec]"><div className="h-[2px] w-[54px] bg-[#4bb492]" /></div>
            ) : (
              <span className="flex items-center gap-[3px] text-[5.500px] leading-[8px] text-[#999]"><i className="h-[4px] w-[4px] rounded-full bg-[#43a580]" />Uploaded</span>
            )}
          </div>
        ))}
      </div>
      <div className={"flex h-[22px] shrink-0 items-center justify-center gap-[3px] rounded-[2px] border border-[#e8e8e8] text-[6.500px] font-medium text-[#333] " + (files.length ? "mt-[7px]" : "mt-[2px]")}>
        {another ? "Upload another file" : "Upload"}<Upload className="h-[5px] w-[5px]" strokeWidth={3} />
      </div>
    </div>
  );
}

function Note() {
  return (
    <>
      <div className="mt-[7px] flex h-[10px] shrink-0 items-center gap-[3px]"><i className="h-[6.500px] w-[6.500px] rounded-full bg-[#e0623d]" /><T w={114} className="text-[6.500px] text-[#777]">Recommended to complete on Desktop</T></div>
      <div className="mt-[3px] flex shrink-0 flex-col items-start text-[7.500px] font-bold leading-[8.500px] text-[#222]"><T w={137}>Reasonable Accommodation Verification</T>Form</div>
    </>
  );
}

function PetDocs({ first }: { first: React.ReactNode }) {
  return (
    <Phone step={1} next="Complete Later">
      <Q w={113}>Please provide the following:</Q>
      {first}
      <MDoc title="Recent Animal Vaccinations" w={80} gap="mt-[8px]" />
      <Note />
    </Phone>
  );
}

function IntroPhone() {
  const row = "flex items-center gap-[5px] text-[6.500px] leading-[11px]";
  const sub = "flex h-[10.600px] items-center gap-[3px] pl-[20px] text-[6.500px]";
  const dot = <i className="h-[2px] w-[2px] rounded-full bg-[#222]" />;
  return (
    <article className="flex h-[343px] w-[159.500px] shrink-0 flex-col overflow-hidden bg-white">
      <PhoneTop />
      <div className="flex min-h-0 flex-1 flex-col overflow-hidden border-t border-[#eee] px-[7.500px] text-[#222]">
        <span className="mt-[6px] flex h-[9px] shrink-0 items-center gap-[2px] text-[6.500px] font-bold"><Chevron dir="left" className="h-[4px] w-[4px]" sw={3} /><T w={60}>Return to My Journey</T></span>
        <T w={104} className="mt-[7px] shrink-0 self-start text-[11px] font-black leading-[13px] text-black">Resident Application</T>
        <T w={121} className="mt-[1px] shrink-0 self-start text-[6.500px] leading-[9px] text-[#aaa]">On average takes 4-8 minutes to complete</T>
        <T w={138} className="mt-[8px] shrink-0 self-start text-[7.500px] font-bold leading-[9px] text-black">Make sure to have these documents ready:</T>
        <div className="mt-[6px] flex h-[13px] shrink-0 items-center justify-between bg-[#4470d6] px-[5px] text-[6px] text-white"><b>Required</b><Chevron className="h-[5px] w-[5px]" /></div>
        <div className="h-[76px] shrink-0 border border-t-0 border-[#e6e6e6] pl-[5px] pt-[4px]">
          <div className={row}><DocIcon className="h-[7px] w-[6px]" /><T w={66}>Government issued I.D.</T></div>
          <div className={row}><DocIcon className="h-[7px] w-[6px]" /><T w={45}>Proof of Income</T></div>
          <div className={sub}>{dot}Employment Contract</div>
          <div className={sub}>{dot}2 Recent Pay Stubs</div>
          <div className={sub + " font-bold"}><span className="pl-[5px]">OR</span></div>
          <div className={sub}>{dot}<T w={94}>other set of eligible documents</T></div>
        </div>
        <div className="mt-[4px] flex h-[14px] shrink-0 items-center justify-between bg-[#707274] px-[5px] text-[6px] text-white"><b>If Applicable</b><Chevron className="h-[5px] w-[5px]" /></div>
        <div className="h-[36px] shrink-0 border border-[#e6e6e6] pl-[5px] pt-[4px]">
          <div className={row}><DocIcon className="h-[7px] w-[6px]" />U.S. Visa</div>
          <div className={row}><DocIcon className="h-[7px] w-[6px]" />ESA/SA/Pet Documents</div>
        </div>
      </div>
      <div className="flex h-[69px] shrink-0 flex-col items-center border-t border-[#e6e6e6] bg-[#f8f8f8] pt-[7px] text-[6px] leading-[7.300px] text-[#777]">
        <T w={102}>By clicking <b className="text-[#222]">Begin</b> I confirm that my personal</T>
        <T w={111}>information will be used to perform background</T>
        <T w={71}>checks and income verification.</T>
        <span className="mt-[8px] flex h-[21px] w-[144px] items-center justify-center rounded-full bg-[#222] text-[7px] font-bold text-white">Begin</span>
      </div>
      <PhoneBottom />
    </article>
  );
}

function GovSub({ w, children }: Kids & { w: number }) {
  return <div className="mt-[4px] flex h-[8px] shrink-0 items-center"><T w={w} className="text-[6.500px] leading-[8px] text-[#444] underline">{children}</T></div>;
}

function Gov({ files, loading, another, badge = true }: { files?: string[]; loading?: boolean; another?: boolean; badge?: boolean }) {
  return (
    <Phone step={2}>
      <Q w={138}>Please provide your government ID:</Q>
      <GovSub w={127}>View list of acceptable Gov. ID documents</GovSub>
      <MDoc title="Government I.D." w={48} gap="mt-[8px]" files={files} loading={loading} another={another} badge={badge} />
      <BlueBar gap="mt-[6px]">Not a U.S. Citizen?</BlueBar>
      <Privacy />
    </Phone>
  );
}

function MobileCanvas() {
  const photo = "Recent Photo of Animal";
  const column = "absolute top-[136.600px] flex flex-col gap-[22px]";
  return (
    <aside className="relative h-full flex-1 overflow-hidden border-l-[3px] border-black bg-[#e4e4e4]">
      <div className="absolute left-[44px] top-[30px] flex h-[46px] items-center gap-[12px] text-[#7a4bdd]">
        <Diamonds className="h-[40px] w-[40px]" />
        <T w={476} className="font-['Inter',sans-serif] text-[39px] leading-[46px]">V2.1 Resident Application</T>
      </div>
      <div className="absolute left-[43px] top-[83px] h-[3800px] w-[1000px] border-[3px] border-dashed border-[#8268d2]" />

      <div className={"left-[101px] " + column}><IntroPhone /></div>

      <div className={"left-[379px] " + column}>
        <Phone step={1}>
          <Q w={117}>Please confirm your full name:</Q>
          <MField label="First Name" value="Sandy" gap="mt-[29px]" />
          <MField label="Middle Name (optional)" value="Middle" gap="mt-[8px]" />
          <MField label="Last Name" value="Fan" gap="mt-[8px]" />
        </Phone>
        <Phone step={1}>
          <Q w={129}>Please confirm your date of birth:</Q>
          <MField label="Birthday" value="January 1st, 1990" w={52} gap="mt-[66px]" right={<Pencil className="h-[6px] w-[6px]" />} />
        </Phone>
        <Phone step={1}>
          <Q w={137}>Please confirm your phone number:</Q>
          <MField label="Phone Number" value="🇺🇸   +1 307 444 9999" gap="mt-[61px]" />
        </Phone>
        <Phone step={1}>
          <Q w={114}>What is your gender identity?</Q>
          <Options items={["Female", "Male", "Other"]} />
        </Phone>
        <Phone step={1}>
          <Q w={134}>Do you plan to move in with a pet?</Q>
          <Options items={["No, I do not have a pet.", "Yes, I have a pet.", "Yes, I have an ESA.", "Yes, I have a service animal."]} />
        </Phone>
        <Phone step={1}>
          <Q w={113}>Please provide the following:</Q>
          <MDoc title={photo} w={69} gap="mt-[10px]" />
          <MDoc title="Recent Animal Vaccinations" w={80} gap="mt-[7px]" />
        </Phone>
        <Phone step={1} next="Complete Later">
          <Q w={113}>Please provide the following:</Q>
          <MDoc title={photo} w={69} gap="mt-[10px]" />
          <MDoc title="Recent Animal Vaccinations" w={80} gap="mt-[7px]" />
          <Note />
          <div className="mt-[8px] h-[9px] shrink-0 text-[6px] leading-[9px] text-[#888]">Send form to email</div>
          <div className="flex h-[16px] shrink-0 items-start justify-between rounded-[2px] border border-[#e4e4e4] px-[6px] text-[6px] leading-[8px]"><span className="text-[#bbb]">Email</span><b>Send</b></div>
        </Phone>
        <PetDocs first={<MDoc title={photo} w={69} gap="mt-[10px]" files={["My_Document.pdf"]} loading />} />
        <PetDocs first={<MDoc title={photo} w={69} gap="mt-[10px]" files={["My_Document.pdf"]} badge={false} another />} />
        <PetDocs first={<MDoc title={photo} w={69} gap="mt-[10px]" files={["My_Document.pdf", "My_Surprising_D...ment.pdf"]} another />} />
      </div>

      <div className={"left-[656px] " + column}>
        <Ssn value="X X X  -  X X X -  X X X X" dim />
        <Ssn value="1 2 0 - 1 2 - 1 2 8 3" error dim />
        <Ssn value="1 2 0 - 1 2 - 1 2 2 0" />
        <Gov />
        <Gov files={["My_Document.pdf"]} loading />
        <Gov files={["My_Document.pdf"]} another badge={false} />
        <Phone step={2}>
          <Q w={113}>Please provide your U.S. Visa:</Q>
          <GovSub w={112}>View list of acceptable ID documents</GovSub>
          <MDoc title="U.S. Visa" w={26} gap="mt-[7px]" />
          <Privacy />
        </Phone>
        <Phone step={2} gray>
          <div className="flex flex-col items-center">
            <T w={128} className="mt-[15px] text-[7.500px] font-bold leading-[10px] text-[#222]">Select your document issuing country</T>
            <T w={122} className="mt-[2px] text-[5.500px] leading-[8px] text-[#bbb]">Please select the country where your document was issued</T>
            <div className="mt-[13px] flex h-[20px] w-[132px] items-center justify-between rounded-[2px] bg-white px-[5px] text-[5.500px] text-[#aaa]">Select an issuing country<Chevron className="h-[4px] w-[4px]" /></div>
            <div className="mt-[72px] flex h-[15px] w-[132px] items-center justify-center bg-[#dcdcde] text-[5.500px] text-[#b3b5c4]">Select document and continue</div>
            <T w={90} className="mt-[36px] text-[5.500px] leading-[8px] text-[#b8b8c0]">Powered by iDenfy. How it works? <span className="text-[#8899dd]">Learn more</span></T>
          </div>
        </Phone>
      </div>
    </aside>
  );
}

export default function App() {
  return (
    <div className="h-[3716px] w-[4096px] overflow-hidden bg-white">
      <div className="relative flex h-[3755px] w-[4139px] overflow-hidden font-['Lato','Open_Sans',sans-serif] [font-variant-ligatures:none] [zoom:0.98961]">
        <div className="flex h-full w-[3240px] shrink-0 flex-col">
          <Landing />
          <ComponentCanvas />
        </div>
        <MobileCanvas />
        <div className="pointer-events-none absolute inset-0 border-[3px] border-black" />
      </div>
    </div>
  );
}
